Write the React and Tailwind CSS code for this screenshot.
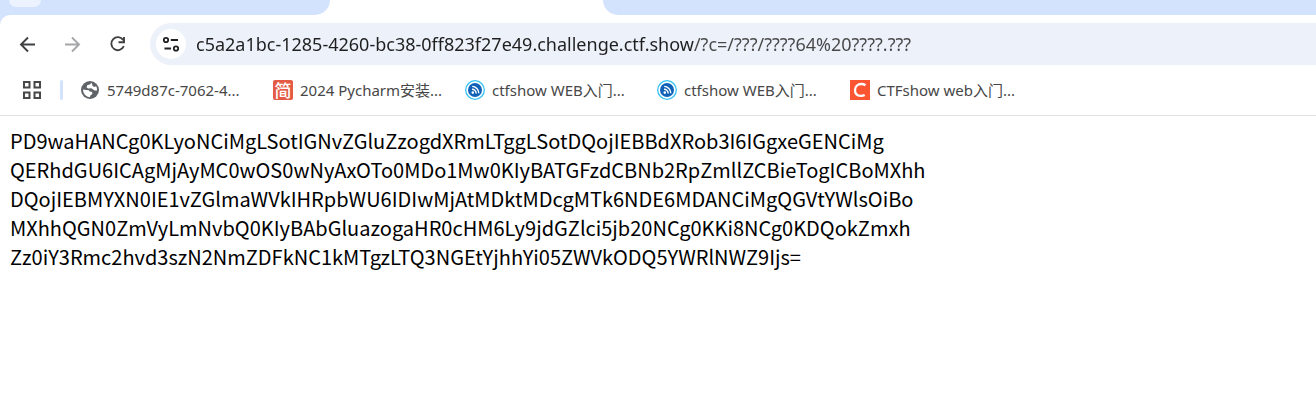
import React from "react";

const bookmarks = [
  { label: "5749d87c-7062-4...", icon: "globe", width: "w-[193px]" },
  { label: "2024 Pycharm安装...", icon: "jian", width: "w-[192px]" },
  { label: "ctfshow WEB入门...", icon: "feed", width: "w-[192px]" },
  { label: "ctfshow WEB入门...", icon: "feed", width: "w-[193px]" },
  { label: "CTFshow web入门...", icon: "csdn", width: "w-[192px]" },
];

const lines = [
  "PD9waHANCg0KLyoNCiMgLSotIGNvZGluZzogdXRmLTggLSotDQojIEBBdXRob3I6IGgxeGENCiMg",
  "QERhdGU6ICAgMjAyMC0wOS0wNyAxOTo0MDo1Mw0KIyBATGFzdCBNb2RpZmllZCBieTogICBoMXhh",
  "DQojIEBMYXN0IE1vZGlmaWVkIHRpbWU6IDIwMjAtMDktMDcgMTk6NDE6MDANCiMgQGVtYWlsOiBo",
  "MXhhQGN0ZmVyLmNvbQ0KIyBAbGluazogaHR0cHM6Ly9jdGZlci5jb20NCg0KKi8NCg0KDQokZmxh",
  "Zz0iY3Rmc2hvd3szN2NmZDFkNC1kMTgzLTQ3NGEtYjhhYi05ZWVkODQ5YWRlNWZ9Ijs=",
];

function Favicon({ name }) {
  if (name === "globe") {
    return (
      <svg className="size-5 shrink-0" viewBox="0 0 20 20" aria-hidden="true">
        <circle cx="10" cy="10" r="9" fill="#5f6368" />
        <path
          d="M3 9.5 6.2 10 8.8 10.2 9.8 11.600 12.200 12 12.200 14.200 10.500 15.200 9.800 17.2A7.3 7.3 0 0 1 3 9.5ZM11.600 2.8 9.800 4.500 7.200 5.2 6.600 7.5 8.200 8.600 11.500 8.3 13 9.600 14.800 10.600 17.100 10.600A7.300 7.300 0 0 0 16.200 6.200L14 7 12.600 5.800Z"
          fill="#fff"
        />
      </svg>
    );
  }
  if (name === "jian") {
    return (
      <span
        className="flex size-5 shrink-0 items-center justify-center rounded-xs bg-[#e35b45] font-['Noto_Sans_CJK_SC',sans-serif] text-[17px] leading-5 font-medium text-white"
        aria-hidden="true"
      >
        简
      </span>
    );
  }
  if (name === "feed") {
    return (
      <svg className="size-5 shrink-0" viewBox="0 0 20 20" fill="none" aria-hidden="true">
        <circle cx="10" cy="10" r="9.3" stroke="#35c3f5" strokeWidth="1.3" />
        <circle cx="10" cy="10" r="7" fill="#0f62b8" />
        <circle cx="7.8" cy="12.6" r="1.3" fill="#fff" />
        <path d="M7 9.2a4.2 4.2 0 0 1 4.2 4.2M7.2 6.4a6.8 6.8 0 0 1 6.6 6.8" stroke="#fff" strokeWidth="1.4" />
      </svg>
    );
  }
  return (
    <svg className="size-5 shrink-0" viewBox="0 0 20 20" fill="none" aria-hidden="true">
      <rect width="20" height="20" fill="#fc5531" />
      <path
        d="M15.5 5.2C14.4 4.4 13 4 11.4 4 7.6 4 5 6.6 5 10.2c0 3.500 2.200 5.600 5.700 5.600 1.500 0 2.900-.3 4-.9"
        stroke="#fff"
        strokeWidth="2.300"
      />
    </svg>
  );
}

export default function App() {
  return (
    <div className="overflow-hidden bg-white font-['Noto_Sans','Noto_Sans_CJK_SC',sans-serif]">
      <header className="bg-[#d3e3fd]">
        <div className="flex h-[15px] bg-white">
          <div className="w-[330px] shrink-0 rounded-br-[15px] bg-[#d3e3fd] pl-[9px]">
            <div className="h-[7px] w-8 rounded-b-[10px] bg-[#ecf2fe]" />
          </div>
          <div className="w-[273px] shrink-0" />
          <div className="flex-1 rounded-bl-[15px] bg-[#d3e3fd]" />
        </div>

        <div className="rounded-tl-[10px] border-b border-[#dfe1e5] bg-white pt-2">
          <div className="flex items-center">
            <nav className="flex w-[150px] shrink-0 items-center gap-[25px] pl-[18px]" aria-label="Navigation">
              <button type="button" aria-label="Back">
                <svg className="size-5" viewBox="0 0 20 20" fill="none" stroke="#3f4042" strokeWidth="1.900" aria-hidden="true">
                  <path d="M17 10.500H3.300M10 3.500l-7 7 7 7" />
                </svg>
              </button>
              <button type="button" aria-label="Forward">
                <svg className="size-5" viewBox="0 0 20 20" fill="none" stroke="#a5a6a8" strokeWidth="1.900" aria-hidden="true">
                  <path d="M2 10.500h13.700M9 3.500l7 7-7 7" />
                </svg>
              </button>
              <button type="button" aria-label="Reload">
                <svg className="size-5" viewBox="0 0 20 20" fill="none" stroke="#3f4042" strokeWidth="1.900" aria-hidden="true">
                  <path d="M15.200 6A6.500 6.500 0 1 0 15.800 12.200M16 3v5.200h-5.500" />
                </svg>
              </button>
            </nav>
            <div className="flex h-[42px] flex-1 items-center gap-[10px] rounded-l-full bg-[#ecf1fa] pl-[6px]">
              <button
                type="button"
                aria-label="Site information"
                className="flex size-[30px] shrink-0 items-center justify-center rounded-full bg-white"
              >
                <svg className="size-5" viewBox="0 0 20 20" fill="none" stroke="#202124" strokeWidth="1.800" aria-hidden="true">
                  <circle cx="5" cy="6" r="2.200" />
                  <path d="M9.800 6H17M3.500 14.500h6.500" />
                  <circle cx="15" cy="14.500" r="2.200" />
                </svg>
              </button>
              <input
                type="text"
                aria-label="Address"
                spellCheck={false}
                defaultValue="c5a2a1bc-1285-4260-bc38-0ff823f27e49.challenge.ctf.show/?c=/???/????64%20????.???"
                className="h-[30px] min-w-0 flex-1 bg-linear-to-r from-[#1f1f1f] from-[499px] to-[#474747] to-[499px] bg-clip-text text-[18px] text-transparent caret-black outline-none"
              />
            </div>
          </div>

          <nav className="flex h-[50px] items-center text-[15px] text-[#474747]" aria-label="Bookmarks">
            <button type="button" aria-label="Apps" className="ml-[22px] shrink-0">
              <svg className="size-5" viewBox="0 0 20 20" fill="none" stroke="#474747" strokeWidth="2" aria-hidden="true">
                <path d="M2 2h5.500v5.500H2zM12.500 2H18v5.500h-5.500zM2 12.500h5.500V18H2zM12.500 12.500H18V18h-5.500z" />
              </svg>
            </button>
            <span className="mr-[17px] ml-[18px] h-5 w-[3px] shrink-0 rounded-full bg-[#d3e3fd]" />
            {bookmarks.map((item, index) => (
              <a key={index} href="#" className={`flex shrink-0 items-center gap-[7px] ${item.width}`}>
                <Favicon name={item.icon} />
                <span className="whitespace-nowrap">{item.label}</span>
              </a>
            ))}
          </nav>
        </div>
      </header>

      <main className="p-[10px] font-['Noto_Sans_CJK_SC',sans-serif] text-[20px] leading-[29px] text-black">
        {lines.map((line) => (
          <p key={line}>{line}</p>
        ))}
      </main>
    </div>
  );
}
